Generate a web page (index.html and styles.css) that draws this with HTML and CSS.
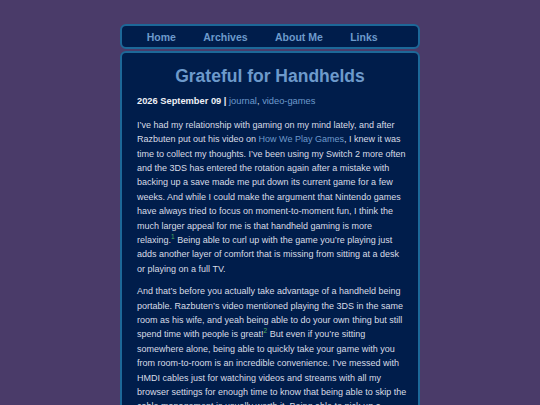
FILE: index.html
```html
<!DOCTYPE html>
<html lang="en">
<head>
<meta charset="utf-8">
<title>Grateful for Handhelds</title>
<link rel="stylesheet" href="styles.css">
</head>
<body>
<div class="wrap">
  <nav class="nav">
    <a href="#">Home</a>
    <a href="#">Archives</a>
    <a href="#">About Me</a>
    <a href="#">Links</a>
  </nav>
  <main class="post">
    <h1 class="title">Grateful for Handhelds</h1>
    <p class="meta"><strong>2026 September 09 |</strong> <a href="#">journal</a>, <a href="#">video-games</a></p>
    <p>I’ve had my relationship with gaming on my mind lately, and after Razbuten put out his video on <a href="#">How We Play Games</a>, I knew it was time to collect my thoughts. I’ve been using my Switch 2 more often and the 3DS has entered the rotation again after a mistake with backing up a save made me put down its current game for a few weeks. And while I could make the argument that Nintendo games have always tried to focus on moment-to-moment fun, I think the much larger appeal for me is that handheld gaming is more relaxing.<sup class="fn">1</sup> Being able to curl up with the game you’re playing just adds another layer of comfort that is missing from sitting at a desk or playing on a full TV.</p>
    <p>And that’s before you actually take advantage of a handheld being portable. Razbuten’s video mentioned playing the 3DS in the same room as his wife, and yeah being able to do your own thing but still spend time with people is great!<sup class="fn">2</sup> But even if you’re sitting somewhere alone, being able to quickly take your game with you from room-to-room is an incredible convenience. I’ve messed with HMDI cables just for watching videos and streams with all my browser settings for enough time to know that being able to skip the cable management is usually worth it. Being able to pick up a device and keep playing wherever you are is a real joy.</p>
  </main>
</div>
</body>
</html>
```
FILE: styles.css
```css
html, body {
  margin: 0;
  padding: 0;
}
body {
  background: #4a3b69;
  font-family: "Liberation Sans", Arial, sans-serif;
  color: #d8dce6;
  padding-top: 24px;
}
.wrap {
  width: 300px;
  margin: 0 auto;
}
.nav {
  display: flex;
  align-items: center;
  height: 21px;
  padding: 0 11px;
  background: #001d4b;
  border: 2px solid #1d6898;
  border-radius: 6px;
}
.nav a {
  color: #6d9acb;
  font-weight: bold;
  font-size: 10.5px;
  text-decoration: none;
  padding: 0 13.7px;
}
.post {
  margin-top: 2px;
  background: #001d4b;
  border: 2px solid #1d6898;
  border-radius: 6px;
  padding: 13px 11px 20px 15px;
  font-size: 9px;
  line-height: 1.6;
}
.title {
  margin: 0;
  text-align: center;
  font-size: 17.5px;
  line-height: 1.2;
  color: #6d9acb;
  padding-right: 4px;
}
.meta {
  font-size: 9.3px;
}
.meta strong {
  color: #eef0f5;
}
.post p {
  margin: 0 0 8px;
}
.post p.meta {
  margin: 7px 0 9px;
}
.post a {
  color: #6d9acb;
  text-decoration: none;
}
.fn {
  color: #4cae5c;
  font-size: 6.5px;
  line-height: 1;
}
```
